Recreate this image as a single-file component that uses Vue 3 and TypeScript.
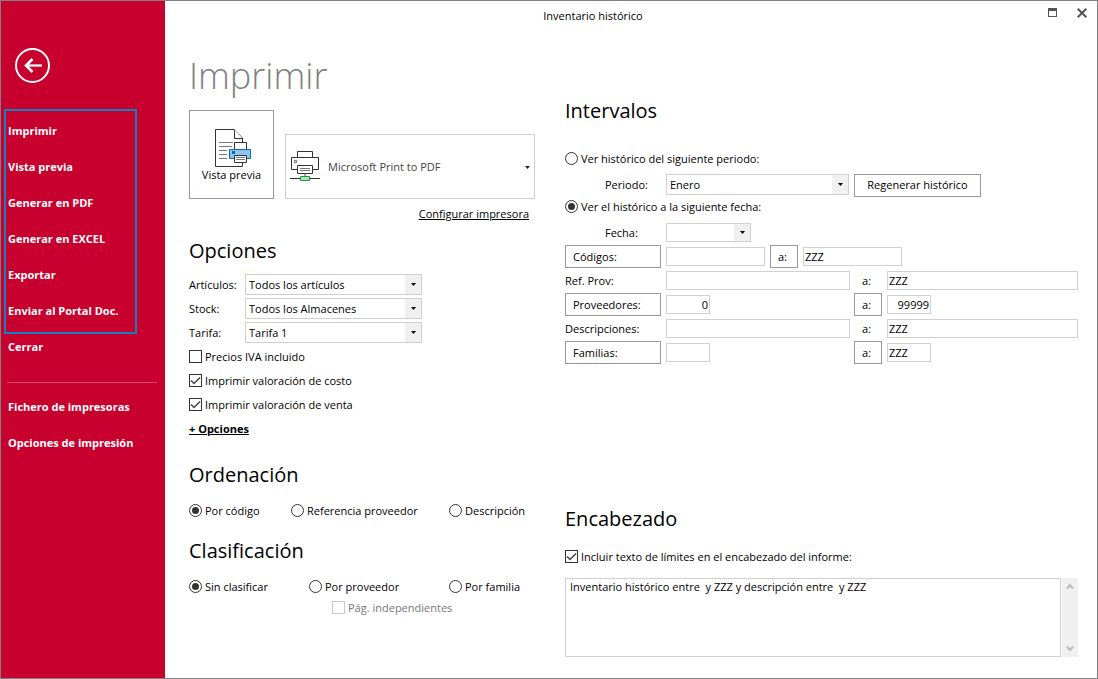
<script setup lang="ts">
import { ref } from 'vue'

interface Combo {
  id: string
  label: string
  value: string
}

const printActions: string[] = [
  'Imprimir',
  'Vista previa',
  'Generar en PDF',
  'Generar en EXCEL',
  'Exportar',
  'Enviar al Portal Doc.',
]
const setupActions: string[] = ['Fichero de impresoras', 'Opciones de impresión']

const combos: Combo[] = [
  { id: 'articulos', label: 'Artículos:', value: 'Todos los artículos' },
  { id: 'stock', label: 'Stock:', value: 'Todos los Almacenes' },
  { id: 'tarifa', label: 'Tarifa:', value: 'Tarifa 1' },
]

const vatIncluded = ref(false)
const printCost = ref(true)
const printSale = ref(true)
const order = ref('codigo')
const grouping = ref('ninguna')
const period = ref('fecha')
const includeLimits = ref(true)
const headerText = ref('Inventario histórico entre  y ZZZ y descripción entre  y ZZZ')

const codeFrom = ref('')
const codeTo = ref('ZZZ')
const refFrom = ref('')
const refTo = ref('ZZZ')
const supplierFrom = ref('0')
const supplierTo = ref('99999')
const descFrom = ref('')
const descTo = ref('ZZZ')
const familyFrom = ref('')
const familyTo = ref('ZZZ')
</script>

<template>
  <div class="window">
    <aside class="sidebar">
      <button class="back" type="button" aria-label="Volver">
        <svg viewBox="0 0 35 35" width="35" height="35" fill="none" stroke="#fff">
          <circle cx="17.500" cy="17.500" r="16.500" stroke-width="2" />
          <path d="M10.500 17.500H27" stroke-width="2.200" />
          <path d="M17.500 11L11 17.500L17.500 24" stroke-width="2.600" />
        </svg>
      </button>
      <nav class="menu">
        <div class="framed">
          <button v-for="item in printActions" :key="item" class="item" type="button">{{ item }}</button>
        </div>
        <button class="item" type="button">Cerrar</button>
        <hr class="divider" />
        <button v-for="item in setupActions" :key="item" class="item" type="button">{{ item }}</button>
      </nav>
    </aside>

    <div class="body">
      <header class="titlebar">
        <span class="title">Inventario histórico</span>
        <div class="controls">
          <button type="button" aria-label="Maximizar">
            <svg viewBox="0 0 9 9" width="9" height="9">
              <path d="M0 0H9V9H0ZM1 3V8H8V3Z" fill="#555" fill-rule="evenodd" />
            </svg>
          </button>
          <button type="button" aria-label="Cerrar ventana">
            <svg viewBox="0 0 10 10" width="10" height="10">
              <path d="M0.700 0.700L9.300 9.300M9.300 0.700L0.700 9.300" stroke="#555" stroke-width="2" />
            </svg>
          </button>
        </div>
      </header>

      <main class="content">
        <div class="left">
          <h1>Imprimir</h1>
          <div class="print-row">
            <button class="preview" type="button">
              <svg viewBox="-1 -1 38 40" width="38" height="40">
                <path d="M1.500 1.500H20L28.500 10V38.500H1.500Z" fill="#fff" stroke="#333" />
                <path d="M20.500 1.500V10.500H28.500" fill="#fff" stroke="#333" />
                <path d="M5 14.500H19M5 18.500H18M5 22.500H13M5 26.500H13M5 30.500H13" stroke="#777" />
                <path d="M20.500 21V14.500H32.500V21" fill="#fff" stroke="#333" />
                <path d="M15.500 21.500H36.500V30.500H15.500Z" fill="#8cc4f0" stroke="#1067b0" />
                <path d="M18 23H21V26H18Z" fill="#1067b0" />
                <path d="M20.500 27.500H32.500V34.500H20.500Z" fill="#fff" stroke="#333" />
                <path d="M22 29.500H31M22 31.500H31" stroke="#777" />
              </svg>
              <span>Vista previa</span>
            </button>
            <div class="printer">
              <svg class="printer-icon" viewBox="0 0 31 31" width="31" height="31">
                <path d="M7.500 7V0.500H22.500V7" fill="#fff" stroke="#333" />
                <path d="M1.500 6.500H28.500V18.500H1.500Z" fill="#fff" stroke="#333" />
                <path d="M4.500 9.500H6.500V11.500H4.500Z" fill="#fff" stroke="#777" />
                <path d="M7.500 14.500H22.500V22.500H7.500Z" fill="#fff" stroke="#333" />
                <path d="M10 17.500H20M10 19.500H20" stroke="#777" />
                <path d="M15 23V26" stroke="#aaa" stroke-width="2" />
                <path d="M0 27.500H30" stroke="#333" />
                <path d="M10.500 25.500H19.500V29.500H10.500Z" fill="#b5e0bc" stroke="#169a40" />
              </svg>
              <select aria-label="Impresora">
                <option>Microsoft Print to PDF</option>
              </select>
              <svg class="arrow" viewBox="0 0 5 3" width="5" height="3"><path d="M0 0H5L2.500 3Z" fill="#222" /></svg>
            </div>
          </div>
          <a class="configure" href="#">Configurar impresora</a>

          <section class="options">
            <h2>Opciones</h2>
            <div v-for="c in combos" :key="c.id" class="line">
              <label class="combo-label" :for="c.id">{{ c.label }}</label>
              <div class="combo">
                <select :id="c.id"><option>{{ c.value }}</option></select>
                <span class="drop"><svg viewBox="0 0 5 3" width="5" height="3"><path d="M0 0H5L2.500 3Z" /></svg></span>
              </div>
            </div>
            <label class="choice"><input v-model="vatIncluded" type="checkbox" />Precios IVA incluido</label>
            <label class="choice"><input v-model="printCost" type="checkbox" />Imprimir valoración de costo</label>
            <label class="choice"><input v-model="printSale" type="checkbox" />Imprimir valoración de venta</label>
            <a class="more" href="#">+ Opciones</a>
          </section>

          <section class="order">
            <h2>Ordenación</h2>
            <div class="radios">
              <label class="choice"><input v-model="order" type="radio" name="orden" value="codigo" />Por código</label>
              <label class="choice"><input v-model="order" type="radio" name="orden" value="referencia" />Referencia proveedor</label>
              <label class="choice"><input v-model="order" type="radio" name="orden" value="descripcion" />Descripción</label>
            </div>
          </section>

          <section class="grouping">
            <h2>Clasificación</h2>
            <div class="radios">
              <label class="choice"><input v-model="grouping" type="radio" name="clase" value="ninguna" />Sin clasificar</label>
              <label class="choice"><input v-model="grouping" type="radio" name="clase" value="proveedor" />Por proveedor</label>
              <label class="choice"><input v-model="grouping" type="radio" name="clase" value="familia" />Por familia</label>
            </div>
            <label class="choice nested"><input type="checkbox" disabled />Pág. independientes</label>
          </section>
        </div>

        <div class="right">
          <section class="ranges">
            <h2>Intervalos</h2>
            <label class="choice tight"><input v-model="period" type="radio" name="periodo" value="periodo" />Ver histórico del siguiente periodo:</label>
            <div class="sub">
              <label for="periodo">Periodo:</label>
              <div class="combo month">
                <select id="periodo"><option>Enero</option></select>
                <span class="drop"><svg viewBox="0 0 5 3" width="5" height="3"><path d="M0 0H5L2.500 3Z" /></svg></span>
              </div>
              <button class="push rebuild" type="button">Regenerar histórico</button>
            </div>
            <label class="choice tight"><input v-model="period" type="radio" name="periodo" value="fecha" />Ver el histórico a la siguiente fecha:</label>
            <div class="sub">
              <label for="fecha">Fecha:</label>
              <div class="combo date">
                <select id="fecha"><option></option></select>
                <span class="drop"><svg viewBox="0 0 5 3" width="5" height="3"><path d="M0 0H5L2.500 3Z" /></svg></span>
              </div>
            </div>

            <div class="range">
              <button class="push name" type="button">Códigos:</button>
              <div class="half"><input v-model="codeFrom" type="text" aria-label="Códigos desde" /></div>
              <button class="push to" type="button">a:</button>
              <div class="half"><input v-model="codeTo" type="text" aria-label="Códigos hasta" /></div>
            </div>
            <div class="range">
              <label class="name" for="ref-desde">Ref. Prov:</label>
              <div class="from"><input id="ref-desde" v-model="refFrom" type="text" /></div>
              <label class="to" for="ref-hasta">a:</label>
              <div class="wide"><input id="ref-hasta" v-model="refTo" type="text" /></div>
            </div>
            <div class="range">
              <button class="push name" type="button">Proveedores:</button>
              <div class="from"><input v-model="supplierFrom" class="short number" type="text" aria-label="Proveedores desde" /></div>
              <button class="push to" type="button">a:</button>
              <div class="wide"><input v-model="supplierTo" class="short number" type="text" aria-label="Proveedores hasta" /></div>
            </div>
            <div class="range">
              <label class="name" for="desc-desde">Descripciones:</label>
              <div class="from"><input id="desc-desde" v-model="descFrom" type="text" /></div>
              <label class="to" for="desc-hasta">a:</label>
              <div class="wide"><input id="desc-hasta" v-model="descTo" type="text" /></div>
            </div>
            <div class="range">
              <button class="push name" type="button">Familias:</button>
              <div class="from"><input v-model="familyFrom" class="short" type="text" aria-label="Familias desde" /></div>
              <button class="push to" type="button">a:</button>
              <div class="wide"><input v-model="familyTo" class="short" type="text" aria-label="Familias hasta" /></div>
            </div>
          </section>

          <section class="heading">
            <h2>Encabezado</h2>
            <label class="choice"><input v-model="includeLimits" type="checkbox" />Incluir texto de límites en el encabezado del informe:</label>
            <div class="memo">
              <textarea v-model="headerText" aria-label="Texto del encabezado"></textarea>
              <div class="scroll">
                <button type="button" aria-label="Subir">
                  <svg viewBox="0 0 8 7" width="8" height="7"><path d="M1 5.500L4 2L7 5.500" fill="none" stroke="#bbb" stroke-width="2" /></svg>
                </button>
                <button type="button" aria-label="Bajar">
                  <svg viewBox="0 0 8 7" width="8" height="7"><path d="M1 1.500L4 5L7 1.500" fill="none" stroke="#bbb" stroke-width="2" /></svg>
                </button>
              </div>
            </div>
          </section>
        </div>
      </main>
    </div>
  </div>
</template>

<style>
body {
  margin: 0;
  background: #fff;
}
</style>

<style scoped>
.window,
.window * {
  box-sizing: border-box;
}
.window {
  display: flex;
  min-height: 100vh;
  border: 1px solid #808080;
  background: #fff;
  color: #000;
  font: 11px/16px "Open Sans", "Noto Sans", sans-serif;
}
button,
input,
select,
textarea {
  margin: 0;
  padding: 0;
  border: 0;
  border-radius: 0;
  background: none;
  color: inherit;
  font: inherit;
}
a {
  color: inherit;
}
svg {
  display: block;
  flex: none;
}

.sidebar {
  flex: none;
  width: 164px;
  background: #c8002d;
  color: #fff;
}
.back {
  display: block;
  margin: 47px 0 26px 14px;
}
.menu {
  display: flex;
  flex-direction: column;
  padding-left: 3px;
}
.framed {
  display: flex;
  flex-direction: column;
  width: 133px;
  padding: 2px 0 3px;
  border: 2px solid #147fc3;
  margin-bottom: -5px;
}
.item {
  height: 36px;
  padding-left: 4px;
  text-align: left;
  font-weight: 700;
  white-space: nowrap;
}
.framed .item {
  padding-left: 2px;
}
.divider {
  width: 150px;
  height: 1px;
  margin: 17px 0 6px 3px;
  border: 0;
  background: #d84a69;
}

.body {
  flex: 1;
  display: flex;
  flex-direction: column;
  min-width: 0;
}
.titlebar {
  display: flex;
  height: 30px;
}
.title {
  flex: 1;
  line-height: 30px;
  text-align: center;
}
.controls {
  display: flex;
  justify-content: flex-end;
  width: 76px;
}
.controls button {
  display: flex;
  align-items: center;
  justify-content: center;
  width: 30px;
  height: 23px;
}

.content {
  flex: 1;
  display: grid;
  grid-template-columns: 346px 1fr;
  column-gap: 30px;
  padding: 21px 19px 21px 24px;
}
h1 {
  margin: 0 0 10px;
  color: #808080;
  font-size: 36px;
  line-height: 48px;
  font-weight: 300;
}
h2 {
  margin: 0;
  font-size: 20px;
  line-height: 30px;
  font-weight: 400;
}

.print-row {
  display: flex;
  align-items: flex-end;
  gap: 11px;
}
.preview {
  display: flex;
  flex-direction: column;
  align-items: center;
  justify-content: center;
  width: 85px;
  height: 89px;
  border: 1px solid #999;
}
.printer {
  position: relative;
  flex: 1;
  height: 65px;
  border: 1px solid #d0d0d0;
}
.printer select {
  width: 100%;
  height: 100%;
  padding-left: 42px;
  appearance: none;
  color: #444;
}
.printer-icon {
  position: absolute;
  top: 16px;
  left: 4px;
}
.arrow {
  position: absolute;
  top: 31px;
  right: 4px;
}
.configure {
  display: block;
  width: max-content;
  margin: 6px 6px 0 auto;
  line-height: 18px;
}

.options {
  margin-top: 13px;
}
.options h2 {
  margin-bottom: 7px;
}
.line {
  display: flex;
  align-items: center;
  height: 24px;
}
.combo-label {
  width: 56px;
}
.combo {
  position: relative;
  width: 177px;
  height: 21px;
  margin-bottom: 1px;
  border: 1px solid #d0d0d0;
}
.combo select {
  display: block;
  width: 100%;
  height: 100%;
  padding: 0 18px 0 3px;
  appearance: none;
}
.drop {
  position: absolute;
  top: 0;
  right: 0;
  bottom: 0;
  display: flex;
  align-items: center;
  justify-content: center;
  width: 16px;
  background: #f0f0f0;
  pointer-events: none;
}
.choice {
  display: flex;
  align-items: center;
  gap: 3px;
  height: 24px;
  white-space: nowrap;
}
.choice input {
  display: grid;
  place-items: center;
  flex: none;
  width: 13px;
  height: 13px;
  margin-bottom: 1px;
  border: 1px solid #333;
  appearance: none;
}
.choice input[type="radio"] {
  border-radius: 50%;
}
.choice input[type="radio"]:checked::after {
  content: "";
  width: 7px;
  height: 7px;
  border-radius: 50%;
  background: #333;
}
.choice input[type="checkbox"]:checked {
  background: url("data:image/svg+xml,%3Csvg xmlns='http://www.w3.org/2000/svg' viewBox='0 0 11 11'%3E%3Cpath d='M1 5.500L4 8.500L10 2.500' fill='none' stroke='%23444' stroke-width='1.500'/%3E%3C/svg%3E") center / 11px 11px no-repeat;
}
.choice input:disabled {
  border-color: #c8c8c8;
}
.more {
  display: block;
  width: max-content;
  font-weight: 700;
  line-height: 24px;
}

.order {
  margin-top: 19px;
}
.grouping {
  margin-top: 13px;
}
.radios {
  display: grid;
  grid-template-columns: 102px 158px 1fr;
  margin-top: 9px;
}
.grouping .radios {
  grid-template-columns: 120px 140px 1fr;
}
.nested {
  height: 18px;
  margin-left: 143px;
  color: #777;
}

.right {
  display: flex;
  flex-direction: column;
  justify-content: space-between;
  min-width: 0;
  padding-top: 44px;
}
.ranges h2 {
  margin-bottom: 23px;
}
.tight {
  height: 20px;
}
.sub {
  display: flex;
  align-items: center;
  height: 28px;
  padding: 4px 0 0 40px;
}
.sub label {
  width: 61px;
}
.month {
  width: 183px;
}
.date {
  width: 85px;
  height: 19px;
}
.push {
  border: 1px solid #999;
}
.rebuild {
  width: 127px;
  height: 23px;
  margin-left: 5px;
}
.range {
  display: flex;
  align-items: flex-start;
  gap: 5px;
  height: 24px;
}
.name {
  width: 96px;
  line-height: 24px;
}
.push.name {
  height: 23px;
  padding-left: 7px;
  line-height: 21px;
  text-align: left;
}
.to {
  width: 28px;
  height: 23px;
  padding-right: 3px;
  line-height: 24px;
  text-align: center;
}
.push.to {
  line-height: 21px;
}
.half {
  width: 99px;
}
.from {
  width: 184px;
  margin-right: -1px;
}
.wide {
  flex: 1;
}
.range input {
  display: block;
  width: 100%;
  height: 19px;
  margin-top: 2px;
  padding: 0 1px 1px;
  border: 1px solid #d0d0d0;
}
.range input.short {
  width: 44px;
}
.range input.number {
  text-align: right;
}

.heading .choice {
  margin-top: 11px;
}
.memo {
  display: flex;
  gap: 1px;
  margin-top: 9px;
}
textarea {
  flex: 1;
  display: block;
  height: 79px;
  padding: 0 4px;
  border: 1px solid #d0d0d0;
  resize: none;
}
.scroll {
  display: flex;
  flex-direction: column;
  justify-content: space-between;
  width: 16px;
  background: #f0f0f0;
}
.scroll button {
  display: flex;
  align-items: center;
  justify-content: center;
  height: 17px;
}
</style>
